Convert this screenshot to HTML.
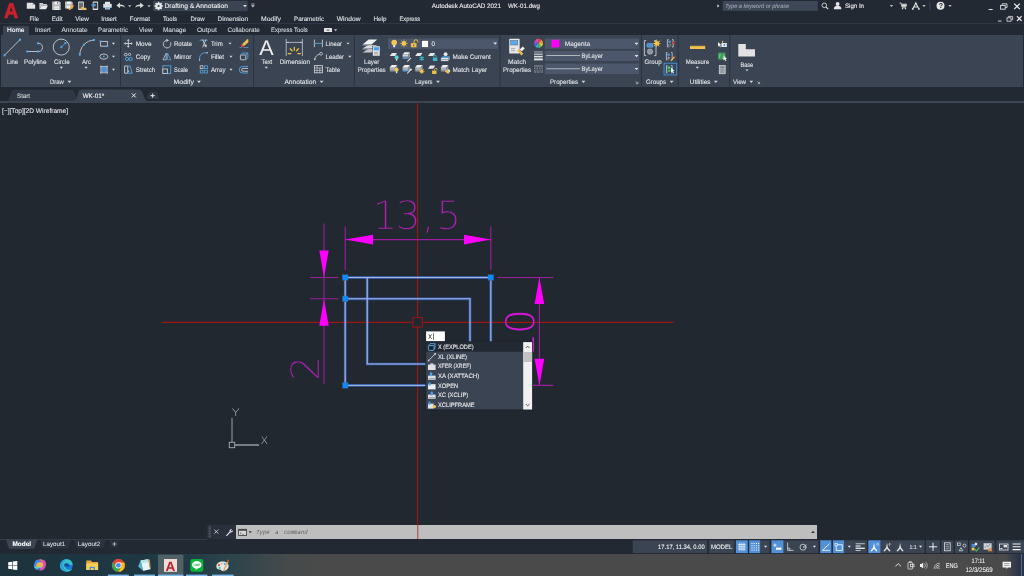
<!DOCTYPE html>
<html lang="en">
<head>
<meta charset="utf-8">
<title>Autodesk AutoCAD 2021 - WK-01.dwg</title>
<style>
html,body{margin:0;padding:0;background:#222933;overflow:hidden}
body{width:1024px;height:576px;position:relative;font-family:"Liberation Sans",sans-serif}
#app{position:absolute;left:0;top:0;width:1024px;height:576px;overflow:hidden;background:#222933}
.r{position:absolute}
#titlebar{left:0;top:0;width:1024px;height:12px;background:#222933}
#menubar{left:0;top:12px;width:1024px;height:11px;background:#222933}
#tabsep{left:0;top:23px;width:1024px;height:1px;background:#2f3744}
#ribbontabs{left:0;top:24px;width:1024px;height:11px;background:#222933}
#hometab{left:2.5px;top:25.8px;width:26.5px;height:9.2px;background:#3b4453;border-radius:1px 1px 0 0}
#ribbon{left:1px;top:34.6px;width:1022px;height:52px;background:#3b4453}
#filetabs{left:0;top:87px;width:1024px;height:15.5px;background:#222933}
#filestrip{left:0;top:100.9px;width:1024px;height:2.3px;background:#3b4453}
#canvas{left:0;top:103.2px;width:1024px;height:436px;background:#212830}
#cmdgrip{left:207px;top:525px;width:29px;height:14px;background:#2a313d}
#cmdline{left:236.2px;top:525.2px;width:580.6px;height:13.5px;background:#bebebe}
#layoutbar{left:0;top:539.4px;width:1024px;height:14.2px;background:#222933}
#layoutline{left:0;top:538.8px;width:207px;height:1px;background:#363d49}
#taskbar{left:0;top:553.8px;width:1024px;height:22.2px;background:linear-gradient(90deg,#1d333e 0,#1f3a45 180px,#2c444b 230px,#454a4b 285px,#4a4a4a 320px,#4a4a4a 100%)}
#tbright{left:1006px;top:553.8px;width:18px;height:22.2px;background:linear-gradient(90deg,rgba(40,50,74,0) 0,rgba(40,50,74,.9) 70%,#28324a 100%)}
#tbedge{left:1021.2px;top:553.8px;width:.8px;height:22.2px;background:#5d6473}
#overlay{position:absolute;left:0;top:0;width:1024px;height:576px;will-change:transform;transform:translateZ(0)}
#overlay{font-family:"Liberation Sans",sans-serif;text-rendering:geometricPrecision}
</style>
</head>
<body>
<div id="app">
<div class="r" id="titlebar"></div>
<div class="r" id="menubar"></div>
<div class="r" id="tabsep"></div>
<div class="r" id="ribbontabs"></div>
<div class="r" id="hometab"></div>
<div class="r" id="ribbon"></div>
<div class="r" id="filetabs"></div>
<div class="r" id="filestrip"></div>
<div class="r" id="canvas"></div>
<div class="r" id="cmdgrip"></div>
<div class="r" id="cmdline"></div>
<div class="r" id="layoutbar"></div>
<div class="r" id="layoutline"></div>
<div class="r" id="taskbar"></div>
<div class="r" id="tbright"></div>
<div class="r" id="tbedge"></div>
<svg id="overlay" width="1024" height="576" viewBox="0 0 1024 576">
<g id="title">
<text x="4" y="18.400" font-size="21.400" font-weight="bold" fill="#cc222b" stroke="#cc222b" stroke-width=".7" textLength="14.200" lengthAdjust="spacingAndGlyphs">A</text>
<g id="qat">
<path d="M26.800 2.700h5.800l2.600 2.400v3.700H26.800z" fill="#e2e2e2"/><path d="M32.600 2.700v2.400h2.600z" fill="#a8a8a8"/>
<path d="M39.400 3h3.200l.9 1h3.500v1.400H41.400L39.400 9.200z" fill="#c9c9c9"/><path d="M41.600 5.400h6.400L46 9.200H39.400z" fill="#e8e8e8"/>
<path d="M52.100 1.600h7.600l1 1v7.400H52.100z" fill="#b9b9b9"/><rect x="54.600" y="1.600" width="4" height="2.800" fill="#f2f2f2"/><rect x="57" y="2" width="1" height="1.800" fill="#7a7a7a"/><rect x="54.200" y="6.400" width="4.800" height="3.600" fill="#f2f2f2"/><rect x="54.200" y="7.800" width="4.800" height=".8" fill="#b9b9b9"/>
<path d="M65 1.600h6.800l1 1v6H65z" fill="#b9b9b9"/><rect x="67" y="1.600" width="3.800" height="2.400" fill="#f2f2f2"/><rect x="66.800" y="5.600" width="3.600" height="3" fill="#f2f2f2"/><path d="M68.600 10.200l.4-1.800 3.400-3.400 1.400 1.400-3.400 3.400z" fill="#e8b040"/><path d="M72.400 5l.8-.8 1.400 1.400-.8.800z" fill="#d8352e"/>
<rect x="78.100" y="1.400" width="5.800" height="8.600" rx=".7" fill="#d9d9d9"/><rect x="78.900" y="2.600" width="4.200" height="6" fill="#6f6f6f"/><path d="M81.400 7h1.800l.6.700h2.400l.4 2.300h-5.200z" fill="#ecc163"/>
<rect x="92.700" y="1.400" width="5.400" height="8.600" rx=".7" fill="#e4e4e4"/><rect x="93.500" y="2.600" width="3.800" height="6" fill="#2e3540"/><path d="M91.200 4.400h3v-1l2.200 1.700-2.200 1.700v-1h-3z" fill="#46a5ee"/>
<rect x="105" y="1.8" width="5" height="2.4" fill="#e9e9e9"/><rect x="103.2" y="3.8" width="8.6" height="4" rx=".6" fill="#d9d9d9"/><rect x="105" y="6.4" width="5" height="3" fill="#f2f2f2"/><rect x="105.4" y="7.2" width="4.2" height="1.6" fill="#53a7e8"/>
<path d="M116.4 5.4l3.6-2.8v1.8c3 0 4.6 1 4.9 3.4-1.2-1.3-2.6-1.7-4.9-1.6v2z" fill="#d9d9d9"/>
<path d="M128.10 5.25h3.2l-1.6 1.9z" fill="#c4c8ce"/>
<path d="M143.8 5.4l-3.6-2.8v1.8c-3 0-4.6 1-4.9 3.4 1.2-1.3 2.6-1.7 4.9-1.6v2z" fill="#d9d9d9"/>
<path d="M147.40 5.25h3.2l-1.6 1.9z" fill="#c4c8ce"/>
</g>
<rect x="153" y=".8" width="94.6" height="10.4" fill="#3b4453"/>
<g transform="translate(158.6 6)"><circle r="2.6" fill="none" stroke="#e8e8e8" stroke-width="1.5"/><g stroke="#e8e8e8" stroke-width="1.3"><path d="M0-4.2V4.2M-4.2 0H4.2M-3-3L3 3M-3 3L3-3"/></g><circle r="2.2" fill="#e8e8e8"/><circle r="1.1" fill="#3b4453"/></g>
<text x="164.40" y="8.20" font-size="6.6" fill="#f0f0f0" stroke="#f0f0f0" stroke-width="0.1" font-weight="normal" font-style="normal" textLength="63.60" lengthAdjust="spacingAndGlyphs">Drafting &amp; Annotation</text>
<path d="M243.10 5.10h3.8l-1.9 2.2z" fill="#e0e0e0"/>
<rect x="251.3" y="3.6" width="3.2" height=".8" fill="#c8c8c8"/>
<path d="M251.00 5.30h3.8l-1.9 2.2z" fill="#c8c8c8"/>
<text x="431.80" y="8.10" font-size="6.5" fill="#f0f0f0" stroke="#f0f0f0" stroke-width="0.1" font-weight="normal" font-style="normal" textLength="69.20" lengthAdjust="spacingAndGlyphs">Autodesk AutoCAD 2021</text>
<text x="508.00" y="8.10" font-size="6.5" fill="#f0f0f0" stroke="#f0f0f0" stroke-width="0.1" font-weight="normal" font-style="normal" textLength="32.00" lengthAdjust="spacingAndGlyphs">WK-01.dwg</text>
<path d="M717.4 4.2l2 1.7-2 1.7z" fill="#e0e0e0"/>
<rect x="722.8" y="1" width="95" height="9.8" fill="#3f4858"/>
<text x="725.30" y="8.00" font-size="5.9" fill="#9aa2b0" stroke="#9aa2b0" stroke-width="0.1" font-weight="normal" font-style="italic" textLength="63.90" lengthAdjust="spacingAndGlyphs">Type a keyword or phrase</text>
<circle cx="824.3" cy="5.3" r="2.3" fill="none" stroke="#d8d8d8" stroke-width=".9"/><path d="M826 7l2.2 2.2" stroke="#d8d8d8" stroke-width="1.1"/>
<circle cx="837.6" cy="4" r="1.9" fill="#e6e6e6"/><path d="M833.8 9.2c0-2.4 1.6-3.4 3.8-3.4s3.8 1 3.8 3.4z" fill="#e6e6e6"/>
<text x="845.00" y="8.10" font-size="6.3" fill="#f0f0f0" stroke="#f0f0f0" stroke-width="0.1" font-weight="normal" font-style="normal" textLength="19.00" lengthAdjust="spacingAndGlyphs">Sign In</text>
<path d="M889.90 5.05h3.2l-1.6 1.9z" fill="#c4c8ce"/>
<path d="M899.6 3h1.4l1 4.2h3.8l.8-3h-5" fill="none" stroke="#d8d8d8" stroke-width=".9"/><circle cx="902.6" cy="8.6" r=".8" fill="#d8d8d8"/><circle cx="905.4" cy="8.6" r=".8" fill="#d8d8d8"/><rect x="902" y="4.4" width="4" height="2.4" fill="#d8d8d8"/>
<path d="M912.800 8.800L915.800 3.200 918.800 8.800M913.900 7h3.800" fill="none" stroke="#e0e0e0" stroke-width="1.100"/><circle cx="912.700" cy="8.900" r=".9" fill="#e0e0e0"/><circle cx="918.900" cy="8.900" r=".9" fill="#e0e0e0"/><circle cx="915.800" cy="3.300" r=".9" fill="#e0e0e0"/>
<path d="M922.40 5.05h3.2l-1.6 1.9z" fill="#c4c8ce"/>
<rect x="929.6" y="1.6" width=".7" height="8.6" fill="#4a5262"/>
<circle cx="940.5" cy="5.8" r="4" fill="#e6e6e6"/>
<text x="938.7" y="8.3" font-size="7" font-weight="bold" fill="#222933">?</text>
<path d="M948.40 5.05h3.2l-1.6 1.9z" fill="#c4c8ce"/>
<rect x="988.600" y="9" width="4" height="1" fill="#e0e0e0"/>
<g fill="none" stroke="#e0e0e0" stroke-width=".9"><rect x="1000.600" y="5.400" width="4.600" height="3.800"/><path d="M1002.200 5.400V3.800h4.800v3.800h-1.600"/></g>
<path d="M1014.200 3.600l5.600 5.600M1019.800 3.600L1014.200 9.200" stroke="#f0f0f0" stroke-width="1.200"/>
<rect x="998" y="20.6" width="3.6" height=".9" fill="#e0e0e0"/>
<g fill="none" stroke="#e0e0e0" stroke-width=".8"><rect x="1007" y="17.8" width="4" height="3.4"/><path d="M1008.4 17.8v-1.4h4.2v3.4h-1.4"/></g>
<path d="M1017 16.2l4.6 4.8M1021.6 16.2L1017 21" stroke="#f0f0f0" stroke-width="1.1"/>
</g>
<g id="menu">
<text x="29.50" y="20.60" font-size="6.4" fill="#dfe2e6" stroke="#dfe2e6" stroke-width="0.1" font-weight="normal" font-style="normal" textLength="9.50" lengthAdjust="spacingAndGlyphs">File</text>
<text x="51.75" y="20.60" font-size="6.4" fill="#dfe2e6" stroke="#dfe2e6" stroke-width="0.1" font-weight="normal" font-style="normal" textLength="10.75" lengthAdjust="spacingAndGlyphs">Edit</text>
<text x="75.25" y="20.60" font-size="6.4" fill="#dfe2e6" stroke="#dfe2e6" stroke-width="0.1" font-weight="normal" font-style="normal" textLength="13.50" lengthAdjust="spacingAndGlyphs">View</text>
<text x="101.25" y="20.60" font-size="6.4" fill="#dfe2e6" stroke="#dfe2e6" stroke-width="0.1" font-weight="normal" font-style="normal" textLength="15.50" lengthAdjust="spacingAndGlyphs">Insert</text>
<text x="129.50" y="20.60" font-size="6.4" fill="#dfe2e6" stroke="#dfe2e6" stroke-width="0.1" font-weight="normal" font-style="normal" textLength="20.50" lengthAdjust="spacingAndGlyphs">Format</text>
<text x="163.00" y="20.60" font-size="6.4" fill="#dfe2e6" stroke="#dfe2e6" stroke-width="0.1" font-weight="normal" font-style="normal" textLength="14.00" lengthAdjust="spacingAndGlyphs">Tools</text>
<text x="190.50" y="20.60" font-size="6.4" fill="#dfe2e6" stroke="#dfe2e6" stroke-width="0.1" font-weight="normal" font-style="normal" textLength="14.00" lengthAdjust="spacingAndGlyphs">Draw</text>
<text x="217.50" y="20.60" font-size="6.4" fill="#dfe2e6" stroke="#dfe2e6" stroke-width="0.1" font-weight="normal" font-style="normal" textLength="30.50" lengthAdjust="spacingAndGlyphs">Dimension</text>
<text x="261.00" y="20.60" font-size="6.4" fill="#dfe2e6" stroke="#dfe2e6" stroke-width="0.1" font-weight="normal" font-style="normal" textLength="20.00" lengthAdjust="spacingAndGlyphs">Modify</text>
<text x="294.00" y="20.60" font-size="6.4" fill="#dfe2e6" stroke="#dfe2e6" stroke-width="0.1" font-weight="normal" font-style="normal" textLength="30.00" lengthAdjust="spacingAndGlyphs">Parametric</text>
<text x="336.75" y="20.60" font-size="6.4" fill="#dfe2e6" stroke="#dfe2e6" stroke-width="0.1" font-weight="normal" font-style="normal" textLength="23.75" lengthAdjust="spacingAndGlyphs">Window</text>
<text x="373.50" y="20.60" font-size="6.4" fill="#dfe2e6" stroke="#dfe2e6" stroke-width="0.1" font-weight="normal" font-style="normal" textLength="13.00" lengthAdjust="spacingAndGlyphs">Help</text>
<text x="399.50" y="20.60" font-size="6.4" fill="#dfe2e6" stroke="#dfe2e6" stroke-width="0.1" font-weight="normal" font-style="normal" textLength="20.75" lengthAdjust="spacingAndGlyphs">Express</text>
</g>
<g id="rtabs">
<text x="7.00" y="32.00" font-size="6.5" fill="#ffffff" stroke="#ffffff" stroke-width="0.1" font-weight="normal" font-style="normal" textLength="17.50" lengthAdjust="spacingAndGlyphs">Home</text>
<text x="35.00" y="32.00" font-size="6.4" fill="#d5d9de" stroke="#d5d9de" stroke-width="0.1" font-weight="normal" font-style="normal" textLength="15.75" lengthAdjust="spacingAndGlyphs">Insert</text>
<text x="61.50" y="32.00" font-size="6.4" fill="#d5d9de" stroke="#d5d9de" stroke-width="0.1" font-weight="normal" font-style="normal" textLength="26.00" lengthAdjust="spacingAndGlyphs">Annotate</text>
<text x="98.00" y="32.00" font-size="6.4" fill="#d5d9de" stroke="#d5d9de" stroke-width="0.1" font-weight="normal" font-style="normal" textLength="30.00" lengthAdjust="spacingAndGlyphs">Parametric</text>
<text x="139.00" y="32.00" font-size="6.4" fill="#d5d9de" stroke="#d5d9de" stroke-width="0.1" font-weight="normal" font-style="normal" textLength="13.50" lengthAdjust="spacingAndGlyphs">View</text>
<text x="163.00" y="32.00" font-size="6.4" fill="#d5d9de" stroke="#d5d9de" stroke-width="0.1" font-weight="normal" font-style="normal" textLength="23.25" lengthAdjust="spacingAndGlyphs">Manage</text>
<text x="197.00" y="32.00" font-size="6.4" fill="#d5d9de" stroke="#d5d9de" stroke-width="0.1" font-weight="normal" font-style="normal" textLength="19.75" lengthAdjust="spacingAndGlyphs">Output</text>
<text x="227.50" y="32.00" font-size="6.4" fill="#d5d9de" stroke="#d5d9de" stroke-width="0.1" font-weight="normal" font-style="normal" textLength="32.25" lengthAdjust="spacingAndGlyphs">Collaborate</text>
<text x="271.00" y="32.00" font-size="6.4" fill="#d5d9de" stroke="#d5d9de" stroke-width="0.1" font-weight="normal" font-style="normal" textLength="36.75" lengthAdjust="spacingAndGlyphs">Express Tools</text>
<rect x="324" y="28" width="8" height="4" rx=".6" fill="#e6e6e6"/><rect x="326.6" y="29.6" width="2.8" height=".9" fill="#3b4453"/>
<path d="M334.00 29.25h3.2l-1.6 1.9z" fill="#c4c8ce"/>
</g>
<g id="ribbon-draw">
<rect x="120.0" y="35" width="1" height="51.6" fill="#2b323e"/>
<rect x="253.1" y="35" width="1" height="51.6" fill="#2b323e"/>
<rect x="353.8" y="35" width="1" height="51.6" fill="#2b323e"/>
<rect x="499.5" y="35" width="1" height="51.6" fill="#2b323e"/>
<rect x="640.9" y="35" width="1" height="51.6" fill="#2b323e"/>
<rect x="677.7" y="35" width="1" height="51.6" fill="#2b323e"/>
<rect x="729.3" y="35" width="1" height="51.6" fill="#2b323e"/>
<path d="M4.6 55.2L19.8 39.8" stroke="#c9cdd3" stroke-width=".9"/><rect x="3.5" y="54.2" width="2.1" height="2.1" fill="#52a7e8"/><rect x="18.9" y="38.7" width="2.1" height="2.1" fill="#52a7e8"/>
<text x="6.90" y="64.00" font-size="6.6" fill="#e2e4e8" stroke="#e2e4e8" stroke-width="0.1" font-weight="normal" font-style="normal" textLength="11.20" lengthAdjust="spacingAndGlyphs">Line</text>
<path d="M27.2 51.5H38.4A4.05 4.05 0 0 0 38.4 43.4H37.6" fill="none" stroke="#c9cdd3" stroke-width=".9"/>
<rect x="26.2" y="50.5" width="2" height="2" fill="#52a7e8"/>
<rect x="37" y="50.5" width="2" height="2" fill="#52a7e8"/>
<rect x="37" y="42.4" width="2" height="2" fill="#52a7e8"/>
<text x="24.00" y="64.00" font-size="6.6" fill="#e2e4e8" stroke="#e2e4e8" stroke-width="0.1" font-weight="normal" font-style="normal" textLength="22.50" lengthAdjust="spacingAndGlyphs">Polyline</text>
<circle cx="61.25" cy="47.1" r="8" fill="none" stroke="#c9cdd3" stroke-width=".9"/><path d="M61.25 47.1L65.4 43.2" stroke="#52a7e8" stroke-width=".9"/><rect x="60.3" y="46.1" width="2" height="2" fill="#52a7e8"/><rect x="64.5" y="42.1" width="2" height="2" fill="#52a7e8"/>
<text x="54.00" y="64.00" font-size="6.6" fill="#e2e4e8" stroke="#e2e4e8" stroke-width="0.1" font-weight="normal" font-style="normal" textLength="15.75" lengthAdjust="spacingAndGlyphs">Circle</text>
<path d="M59.80 66.85h3.2l-1.6 1.9z" fill="#d8dbe0"/>
<path d="M79.8 54.6C80.2 46.6 86 40.6 94 40" fill="none" stroke="#c9cdd3" stroke-width=".9"/>
<rect x="78.8" y="53.6" width="2" height="2" fill="#52a7e8"/>
<rect x="83" y="43.8" width="2" height="2" fill="#52a7e8"/>
<rect x="93" y="39" width="2" height="2" fill="#52a7e8"/>
<text x="81.90" y="64.00" font-size="6.6" fill="#e2e4e8" stroke="#e2e4e8" stroke-width="0.1" font-weight="normal" font-style="normal" textLength="9.10" lengthAdjust="spacingAndGlyphs">Arc</text>
<path d="M84.50 66.85h3.2l-1.6 1.9z" fill="#d8dbe0"/>
<rect x="100.6" y="41.4" width="6.8" height="4.8" fill="none" stroke="#c9cdd3" stroke-width=".9"/><rect x="99.6" y="40.4" width="1.6" height="1.6" fill="#52a7e8"/><rect x="106.6" y="45.4" width="1.6" height="1.6" fill="#52a7e8"/>
<path d="M111.90 42.85h3.2l-1.6 1.9z" fill="#d8dbe0"/>
<ellipse cx="103.8" cy="56.6" rx="4" ry="2.6" fill="none" stroke="#c9cdd3" stroke-width=".9"/><rect x="103" y="55.8" width="1.5" height="1.5" fill="#52a7e8"/>
<path d="M111.90 55.65h3.2l-1.6 1.9z" fill="#d8dbe0"/>
<rect x="101" y="66.6" width="6" height="6" fill="#4f8fd0"/><path d="M100 66.4h8M100 72.8h8M100.8 65.6v8M107.2 65.6v8" stroke="#c9cdd3" stroke-width=".8"/>
<path d="M111.90 68.75h3.2l-1.6 1.9z" fill="#d8dbe0"/>
<text x="50.00" y="84.00" font-size="6.6" fill="#e2e4e8" stroke="#e2e4e8" stroke-width="0.1" font-weight="normal" font-style="normal" textLength="13.75" lengthAdjust="spacingAndGlyphs">Draw</text>
<path d="M67.50 80.80h3.8l-1.9 2.2z" fill="#d8dbe0"/>
</g>
<g id="ribbon-modify">
<g transform="translate(128.3 43.4)" fill="#c9cdd3"><path d="M-.5-3h1v6h-1zM-3-.5h6v1h-6z"/><path d="M0-4.4l1.5 1.7h-3zM0 4.4l1.5-1.7h-3zM-4.4 0l1.7-1.5v3zM4.4 0l-1.7-1.5v3z"/></g>
<text x="135.75" y="45.90" font-size="6.6" fill="#e2e4e8" stroke="#e2e4e8" stroke-width="0.1" font-weight="normal" font-style="normal" textLength="15.75" lengthAdjust="spacingAndGlyphs">Move</text>
<g fill="none" stroke-width=".9"><circle cx="125.8" cy="54.6" r="1.4" stroke="#c9cdd3"/><circle cx="129.6" cy="54.4" r="1.1" stroke="#c9cdd3"/><circle cx="127" cy="59" r="1.6" stroke="#52a7e8"/><circle cx="130.6" cy="59" r="1.6" stroke="#52a7e8"/></g>
<text x="135.75" y="59.00" font-size="6.6" fill="#e2e4e8" stroke="#e2e4e8" stroke-width="0.1" font-weight="normal" font-style="normal" textLength="14.75" lengthAdjust="spacingAndGlyphs">Copy</text>
<g fill="none" stroke-width=".9"><path d="M124.6 66v7.2h3.2V66z" stroke="#c9cdd3"/><path d="M127.8 66h2.4l2 7.2h-4.4" stroke="#52a7e8"/></g><rect x="127.6" y="70.6" width="1.6" height="1.2" fill="#c9cdd3"/>
<text x="135.75" y="71.50" font-size="6.6" fill="#e2e4e8" stroke="#e2e4e8" stroke-width="0.1" font-weight="normal" font-style="normal" textLength="19.50" lengthAdjust="spacingAndGlyphs">Stretch</text>
<path d="M170.400 42.300A3.800 3.800 0 1 1 166.400 40.400" fill="none" stroke="#c9cdd3" stroke-width=".9"/><path d="M166.200 38.800l2.900 1.500-2.700 1.700z" fill="#c9cdd3"/>
<text x="173.90" y="45.90" font-size="6.6" fill="#e2e4e8" stroke="#e2e4e8" stroke-width="0.1" font-weight="normal" font-style="normal" textLength="18.10" lengthAdjust="spacingAndGlyphs">Rotate</text>
<g fill="none" stroke-width=".8"><path d="M166.2 53.2v6.6h-3.2z" stroke="#c9cdd3"/><path d="M167.6 53.2v6.6h3.2z" stroke="#52a7e8"/></g>
<text x="173.90" y="59.00" font-size="6.6" fill="#e2e4e8" stroke="#e2e4e8" stroke-width="0.1" font-weight="normal" font-style="normal" textLength="17.60" lengthAdjust="spacingAndGlyphs">Mirror</text>
<g fill="none" stroke-width=".9"><rect x="162.8" y="65.8" width="8" height="7.6" stroke="#52a7e8"/><rect x="162.8" y="69" width="4.6" height="4.4" stroke="#c9cdd3" fill="#3b4453"/></g>
<text x="173.90" y="71.50" font-size="6.6" fill="#e2e4e8" stroke="#e2e4e8" stroke-width="0.1" font-weight="normal" font-style="normal" textLength="14.10" lengthAdjust="spacingAndGlyphs">Scale</text>
<g fill="none" stroke-width=".9"><path d="M199.6 40.2h8" stroke="#52a7e8"/><path d="M202.6 39.4l3.4 8M206 39.4l-3.4 8" stroke="#c9cdd3"/></g><circle cx="205.6" cy="45.6" r="1.2" fill="#c9cdd3"/>
<text x="210.90" y="45.90" font-size="6.6" fill="#e2e4e8" stroke="#e2e4e8" stroke-width="0.1" font-weight="normal" font-style="normal" textLength="11.85" lengthAdjust="spacingAndGlyphs">Trim</text>
<path d="M228.40 42.65h3.2l-1.6 1.9z" fill="#d8dbe0"/>
<path d="M199.6 60.4V58A5.2 5.2 0 0 1 204.8 52.8H207.6" fill="none" stroke="#52a7e8" stroke-width=".9"/><path d="M199.6 60.8v-1.6M206.2 52.8h1.8" stroke="#c9cdd3" stroke-width=".9"/>
<text x="210.90" y="59.00" font-size="6.6" fill="#e2e4e8" stroke="#e2e4e8" stroke-width="0.1" font-weight="normal" font-style="normal" textLength="13.10" lengthAdjust="spacingAndGlyphs">Fillet</text>
<path d="M229.40 55.85h3.2l-1.6 1.9z" fill="#d8dbe0"/>
<rect x="200.2" y="65.8" width="2.8" height="2.8" fill="none" stroke="#c9cdd3" stroke-width=".8"/>
<rect x="204.6" y="65.8" width="2.8" height="2.8" fill="none" stroke="#52a7e8" stroke-width=".8"/>
<rect x="200.2" y="70.2" width="2.8" height="2.8" fill="none" stroke="#52a7e8" stroke-width=".8"/>
<rect x="204.6" y="70.2" width="2.8" height="2.8" fill="none" stroke="#52a7e8" stroke-width=".8"/>
<text x="210.90" y="71.50" font-size="6.6" fill="#e2e4e8" stroke="#e2e4e8" stroke-width="0.1" font-weight="normal" font-style="normal" textLength="14.60" lengthAdjust="spacingAndGlyphs">Array</text>
<path d="M229.40 68.85h3.2l-1.6 1.9z" fill="#d8dbe0"/>
<path d="M241.800 44.600l5.600-5.600 1 .6v2.600l-5 4.400z" fill="#edc050"/><circle cx="242.300" cy="45.900" r="1.400" fill="#e8433c"/><path d="M239.600 47.500h2M243.600 47.500h5" stroke="#52a7e8" stroke-width=".7"/>
<g fill="none" stroke="#52a7e8" stroke-width=".9"><rect x="240.4" y="55" width="5.4" height="4.8" rx=".8" stroke="#c9cdd3"/><path d="M240.6 55l1.8-2h5.4v4.8l-1.8 2M245.8 55l2-2"/></g>
<g fill="none" stroke-width=".9"><path d="M248 66.4h-5.4a3.3 3.3 0 0 0 0 6.6H248" stroke="#52a7e8"/><path d="M248 68.4h-5a1.4 1.4 0 0 0 0 2.8H248" stroke="#c9cdd3"/></g>
<text x="173.60" y="84.00" font-size="6.6" fill="#e2e4e8" stroke="#e2e4e8" stroke-width="0.1" font-weight="normal" font-style="normal" textLength="20.30" lengthAdjust="spacingAndGlyphs">Modify</text>
<path d="M197.10 80.80h3.8l-1.9 2.2z" fill="#d8dbe0"/>
</g>
<g id="ribbon-annot">
<text x="259.300" y="55.100" font-size="21.200" fill="#eeeeee" textLength="14.400" lengthAdjust="spacingAndGlyphs">A</text>
<text x="261.50" y="64.00" font-size="6.6" fill="#e2e4e8" stroke="#e2e4e8" stroke-width="0.1" font-weight="normal" font-style="normal" textLength="10.75" lengthAdjust="spacingAndGlyphs">Text</text>
<path d="M264.70 66.85h3.2l-1.6 1.9z" fill="#d8dbe0"/>
<g fill="none" stroke="#c9cdd3" stroke-width=".8"><path d="M286.2 39v17M302.4 39v17M286.2 42.4h16.2"/></g><path d="M286.4 42.4l2-.9v1.8zM302.2 42.4l-2-.9v1.8z" fill="#c9cdd3"/>
<g stroke="#f0c040" stroke-width="1.300" stroke-linecap="round" fill="none"><path d="M294.300 47.400v2.800M290.200 48.800l1.900 2.100M298.400 48.800l-1.900 2.100M288.200 53.600h2.600M297.800 53.600h2.600"/></g>
<text x="279.75" y="64.00" font-size="6.6" fill="#e2e4e8" stroke="#e2e4e8" stroke-width="0.1" font-weight="normal" font-style="normal" textLength="30.25" lengthAdjust="spacingAndGlyphs">Dimension</text>
<path d="M314.4 39.6v7.6M322.4 39.6v7.6" stroke="#c9cdd3" stroke-width=".9"/><path d="M314.4 43.4h8" stroke="#52a7e8" stroke-width=".9"/>
<text x="325.60" y="45.90" font-size="6.6" fill="#e2e4e8" stroke="#e2e4e8" stroke-width="0.1" font-weight="normal" font-style="normal" textLength="16.40" lengthAdjust="spacingAndGlyphs">Linear</text>
<path d="M346.40 42.65h3.2l-1.6 1.9z" fill="#d8dbe0"/>
<path d="M314.6 59.6C315.6 56 317.4 54.6 319.6 54.2" fill="none" stroke="#c9cdd3" stroke-width=".9"/><circle cx="321" cy="53.8" r="1.4" fill="none" stroke="#c9cdd3" stroke-width=".8"/><path d="M314 60.4l.4-2.4 1.6 1.4z" fill="#c9cdd3"/>
<text x="325.60" y="59.00" font-size="6.6" fill="#e2e4e8" stroke="#e2e4e8" stroke-width="0.1" font-weight="normal" font-style="normal" textLength="18.40" lengthAdjust="spacingAndGlyphs">Leader</text>
<path d="M348.20 55.85h3.2l-1.6 1.9z" fill="#d8dbe0"/>
<rect x="314.4" y="65.6" width="8" height="7.2" fill="none" stroke="#c9cdd3" stroke-width=".9"/><path d="M314.4 68h8M314.4 70.4h8M317 65.6v7.2M319.8 68v4.8" stroke="#c9cdd3" stroke-width=".7"/>
<text x="325.60" y="71.50" font-size="6.6" fill="#e2e4e8" stroke="#e2e4e8" stroke-width="0.1" font-weight="normal" font-style="normal" textLength="14.40" lengthAdjust="spacingAndGlyphs">Table</text>
<text x="284.40" y="84.00" font-size="6.6" fill="#e2e4e8" stroke="#e2e4e8" stroke-width="0.1" font-weight="normal" font-style="normal" textLength="31.85" lengthAdjust="spacingAndGlyphs">Annotation</text>
<path d="M319.70 80.80h3.8l-1.9 2.2z" fill="#d8dbe0"/>
</g>
<g id="ribbon-layers">
<g><path d="M362.600 52.400l5.600-3.400h9l-5.600 3.400z" fill="#c3c7cc"/><path d="M362.600 48.400l5.600-3.400h9l-5.600 3.400z" fill="#d9dcdf"/><path d="M362.600 44.400l6-4.800h8.600l-5.600 4.800z" fill="#f0f1f2"/><path d="M362.600 44.400h9v1.200h-9zM362.600 48.400h9v1.200h-9z" fill="#9ea4ab"/><rect x="372.600" y="46" width="7.400" height="10" fill="#e9e9e9" stroke="#3b4453" stroke-width=".5"/><rect x="373.700" y="47.200" width="5.200" height="3.200" fill="#43a0ec"/><path d="M374 52.400h4.400M374 54h4.400" stroke="#8a9099" stroke-width=".8"/></g>
<text x="364.00" y="64.00" font-size="6.6" fill="#e2e4e8" stroke="#e2e4e8" stroke-width="0.1" font-weight="normal" font-style="normal" textLength="15.40" lengthAdjust="spacingAndGlyphs">Layer</text>
<text x="357.75" y="71.50" font-size="6.6" fill="#e2e4e8" stroke="#e2e4e8" stroke-width="0.1" font-weight="normal" font-style="normal" textLength="27.85" lengthAdjust="spacingAndGlyphs">Properties</text>
<rect x="388" y="38.5" width="110" height="10.4" fill="#4c576b"/>
<g><circle cx="394.200" cy="42.600" r="2.800" fill="#f5c851"/><rect x="393.200" y="45" width="2" height="2.200" fill="#ececec"/></g>
<g transform="translate(403.900 43.400)"><circle r="2.300" fill="#f5c851"/><path d="M0-4.100V4.100M-4.100 0H4.100M-2.900-2.900L2.900 2.900M-2.900 2.900L2.900-2.900" stroke="#f5c851" stroke-width=".7" opacity=".8"/></g>
<g><rect x="410.900" y="43.100" width="5.600" height="4.200" fill="#f0bf48"/><path d="M414 43.100v-1.500a1.900 1.900 0 0 1 3.800 0v.8" fill="none" stroke="#f0bf48" stroke-width="1"/><rect x="413.200" y="44.500" width="1" height="1.500" fill="#4c576b"/></g>
<rect x="421.6" y="40.3" width="6.8" height="7.2" fill="#ffffff" stroke="#2a303a" stroke-width=".6"/>
<text x="431.50" y="45.90" font-size="6.6" fill="#e2e4e8" stroke="#e2e4e8" stroke-width="0.1" font-weight="normal" font-style="normal" textLength="3.50" lengthAdjust="spacingAndGlyphs">0</text>
<path d="M493.30 42.50h3.8l-1.9 2.2z" fill="#e6e6e6"/>
<path d="M391.9 53h5.1l-2 3.100h-5.200z" fill="#e4e6e9"/>
<circle cx="396.6" cy="57.2" r="2" fill="#5fd0dc"/><rect x="395.9" y="58.8" width="1.400" height="1.800" fill="#e9e9e9"/>
<path d="M404.5 52.3h5.500l-1.800 2.300h-5.600z" fill="#eceeef"/>
<rect x="402.6" y="54.6" width="5.600" height="1.500" fill="#d4d7db"/><rect x="402.6" y="56.1" width="5.600" height="1.300" fill="#a9aeb5"/><rect x="402.6" y="57.4" width="5.600" height="1.500" fill="#5a9bd8"/>
<path d="M408.2 54.6l1.800-2.300v4.300l-1.800 2.300z" fill="#8d939b"/>
<path d="M407.200 60.900l3.300-3.500.9.900-3.300 3.300-1.100.300z" fill="#e6e6e6"/>
<path d="M417.3 53h5.1l-2 3.100h-5.200z" fill="#e4e6e9"/>
<g transform="translate(421.800 58.400)" stroke="#35b4c8" stroke-width="1.100"><path d="M0-2.500V2.500M-2.200-1.250L2.200 1.250M-2.200 1.250L2.200-1.250"/></g>
<path d="M430.1 53h5.1l-2 3.100h-5.200z" fill="#e4e6e9"/>
<rect x="432.9" y="57.6" width="4.400" height="3.400" fill="#3db8c8"/>
<path d="M433.8 57.6v-1a1.300 1.300 0 0 1 2.600 0v1" fill="none" stroke="#3db8c8" stroke-width=".8"/>
<path d="M442.800 56.400h7l-1.800 1.600h-7.100z" fill="#4f9fe0"/><rect x="440.900" y="58" width="7.100" height="1.100" fill="#e6e8ea"/><rect x="440.900" y="59.100" width="7.100" height="1" fill="#a9aeb5"/><rect x="440.900" y="60.100" width="7.100" height="1" fill="#e6e8ea"/><path d="M448 58l1.800-1.600v3.100l-1.800 1.600z" fill="#9aa0a8"/><path d="M442.800 56.400h7l-1.800 1.600h-7.100z" fill="#4f9fe0"/><circle cx="445.600" cy="54.200" r="1.900" fill="#e9e9e9"/>
<path d="M391.7 64.9h5.500l-1.800 2.300h-5.600z" fill="#eceeef"/>
<rect x="389.8" y="67.2" width="5.600" height="1.500" fill="#d4d7db"/><rect x="389.8" y="68.7" width="5.600" height="1.300" fill="#a9aeb5"/><rect x="389.8" y="70.0" width="5.600" height="1.500" fill="#8d939b"/>
<path d="M395.4 67.2l1.800-2.300v4.300l-1.800 2.300z" fill="#8d939b"/>
<circle cx="396.6" cy="69.8" r="2" fill="#f5c851"/><rect x="395.9" y="71.4" width="1.400" height="1.800" fill="#e9e9e9"/>
<path d="M404.5 64.9h5.500l-1.800 2.300h-5.600z" fill="#eceeef"/>
<rect x="402.6" y="67.2" width="5.600" height="1.500" fill="#d4d7db"/><rect x="402.6" y="68.7" width="5.600" height="1.300" fill="#a9aeb5"/><rect x="402.6" y="70.0" width="5.600" height="1.500" fill="#5a9bd8"/>
<path d="M408.2 67.2l1.800-2.300v4.300l-1.800 2.300z" fill="#8d939b"/>
<path d="M407.200 73.500l2.600-2.800M409.600 70.900l1.600-1.600" stroke="#e6e6e6" stroke-width="1.100" fill="none"/><circle cx="410.900" cy="69.600" r="1" fill="#e6e6e6"/>
<path d="M417.1 64.9h5.500l-1.800 2.300h-5.600z" fill="#eceeef"/>
<rect x="415.2" y="67.2" width="5.600" height="1.500" fill="#d4d7db"/><rect x="415.2" y="68.7" width="5.600" height="1.300" fill="#a9aeb5"/><rect x="415.2" y="70.0" width="5.600" height="1.500" fill="#8d939b"/>
<path d="M420.8 67.2l1.800-2.300v4.300l-1.800 2.300z" fill="#8d939b"/>
<g transform="translate(421.800 71.200)"><circle r="1.500" fill="#f5c851"/><path d="M0-2.800V2.800M-2.800 0H2.800M-2-2L2 2M-2 2L2-2" stroke="#f5c851" stroke-width=".7"/></g>
<path d="M430.1 65.6h5.1l-2 3.100h-5.200z" fill="#e4e6e9"/>
<rect x="432.1" y="70.6" width="4.400" height="3.400" fill="#f0bf48"/>
<path d="M434.5 70.6v-1a1.300 1.300 0 0 1 2.600 0v.6" fill="none" stroke="#f0bf48" stroke-width=".8"/>
<path d="M442.8 64.9h5.500l-1.800 2.300h-5.600z" fill="#eceeef"/>
<rect x="440.9" y="67.2" width="5.600" height="1.500" fill="#d4d7db"/><rect x="440.9" y="68.7" width="5.600" height="1.300" fill="#a9aeb5"/><rect x="440.9" y="70.0" width="5.600" height="1.500" fill="#8d939b"/>
<path d="M446.5 67.2l1.800-2.300v4.300l-1.800 2.300z" fill="#8d939b"/>
<path d="M444.800 71.400l2-1.800 3 2.400-1.600 2z" fill="#f0bf48"/><path d="M447.400 69.800l1.600-.6 1.400 1.800-.8 1.200z" fill="#f2f2f2"/>
<text x="452.40" y="58.80" font-size="6.6" fill="#e2e4e8" stroke="#e2e4e8" stroke-width="0.1" font-weight="normal" font-style="normal" textLength="38.50" lengthAdjust="spacingAndGlyphs">Make Current</text>
<text x="452.40" y="71.50" font-size="6.6" fill="#e2e4e8" stroke="#e2e4e8" stroke-width="0.1" font-weight="normal" font-style="normal" textLength="34.85" lengthAdjust="spacingAndGlyphs">Match Layer</text>
<text x="415.00" y="84.00" font-size="6.6" fill="#e2e4e8" stroke="#e2e4e8" stroke-width="0.1" font-weight="normal" font-style="normal" textLength="17.50" lengthAdjust="spacingAndGlyphs">Layers</text>
<path d="M436.10 80.80h3.8l-1.9 2.2z" fill="#d8dbe0"/>
</g>
<g id="ribbon-props">
<g><rect x="509.2" y="38.8" width="10.4" height="14.6" rx=".6" fill="#e6e6e6"/><rect x="510.6" y="40.4" width="7.2" height="4.6" fill="#58aaf0" stroke="#5d6572" stroke-width=".5"/><path d="M511 48.6h4M511 50.6h4" stroke="#8a9099" stroke-width=".7"/><path d="M517.2 50.6l2-1.6 4.2 4.8-2.2 1.8z" fill="#e8b64a"/><path d="M519.6 49.4l3.2-3 2 2.2-3 2.6z" fill="#f0f0f0"/></g>
<text x="508.00" y="64.00" font-size="6.6" fill="#e2e4e8" stroke="#e2e4e8" stroke-width="0.1" font-weight="normal" font-style="normal" textLength="18.25" lengthAdjust="spacingAndGlyphs">Match</text>
<text x="503.00" y="71.50" font-size="6.6" fill="#e2e4e8" stroke="#e2e4e8" stroke-width="0.1" font-weight="normal" font-style="normal" textLength="28.00" lengthAdjust="spacingAndGlyphs">Properties</text>
<path d="M538.5 43.2L538.50 38.70A4.5 4.5 0 0 1 541.68 40.02z" fill="#e8453c"/>
<path d="M538.5 43.2L541.68 40.02A4.5 4.5 0 0 1 543.00 43.20z" fill="#f29b38"/>
<path d="M538.5 43.2L543.00 43.20A4.5 4.5 0 0 1 541.68 46.38z" fill="#f2d338"/>
<path d="M538.5 43.2L541.68 46.38A4.5 4.5 0 0 1 538.50 47.70z" fill="#5cc24a"/>
<path d="M538.5 43.2L538.50 47.70A4.5 4.5 0 0 1 535.32 46.38z" fill="#38b6d8"/>
<path d="M538.5 43.2L535.32 46.38A4.5 4.5 0 0 1 534.00 43.20z" fill="#5566e0"/>
<path d="M538.5 43.2L534.00 43.20A4.5 4.5 0 0 1 535.32 40.02z" fill="#a44be0"/>
<path d="M538.5 43.2L535.32 40.02A4.5 4.5 0 0 1 538.50 38.70z" fill="#e84ba6"/>
<g fill="#dfe1e4"><rect x="534" y="51.6" width="8.8" height=".7"/><rect x="534" y="53.6" width="8.8" height="1.1"/><rect x="534" y="55.8" width="8.8" height="1.6"/><rect x="534" y="58.4" width="8.8" height="2"/></g>
<g stroke="#aab0b8" stroke-width=".8"><path d="M534 66h8.8" /><path d="M534 68.2h8.8" stroke-dasharray="1.6 .8"/><path d="M534 70.2h8.8" stroke-dasharray=".8 .8"/><path d="M534 72h8.8" stroke-dasharray="2.4 .8"/></g>
<rect x="544.8" y="38.6" width="94.2" height="10.2" fill="#4c576b"/>
<path d="M634.60 42.80h3.8l-1.9 2.2z" fill="#e6e6e6"/>
<rect x="544.8" y="50.9" width="94.2" height="10" fill="#4c576b"/>
<path d="M634.60 55.00h3.8l-1.9 2.2z" fill="#e6e6e6"/>
<rect x="544.8" y="63.6" width="94.2" height="10.4" fill="#4c576b"/>
<path d="M634.60 67.90h3.8l-1.9 2.2z" fill="#e6e6e6"/>
<rect x="551.3" y="39.7" width="8" height="7.8" fill="#ff00ff" stroke="#6b4f78" stroke-width=".4"/>
<text x="564.75" y="45.90" font-size="6.6" fill="#e2e4e8" stroke="#e2e4e8" stroke-width="0.1" font-weight="normal" font-style="normal" textLength="25.25" lengthAdjust="spacingAndGlyphs">Magenta</text>
<rect x="546.3" y="55.2" width="33.8" height=".8" fill="#c9cdd3"/>
<text x="581.50" y="58.00" font-size="6.6" fill="#e2e4e8" stroke="#e2e4e8" stroke-width="0.1" font-weight="normal" font-style="normal" textLength="21.50" lengthAdjust="spacingAndGlyphs">ByLayer</text>
<rect x="546.3" y="68.4" width="33.8" height=".8" fill="#c9cdd3"/>
<text x="581.50" y="70.90" font-size="6.6" fill="#e2e4e8" stroke="#e2e4e8" stroke-width="0.1" font-weight="normal" font-style="normal" textLength="21.50" lengthAdjust="spacingAndGlyphs">ByLayer</text>
<text x="550.00" y="84.00" font-size="6.6" fill="#e2e4e8" stroke="#e2e4e8" stroke-width="0.1" font-weight="normal" font-style="normal" textLength="28.00" lengthAdjust="spacingAndGlyphs">Properties</text>
<path d="M581.60 80.80h3.8l-1.9 2.2z" fill="#d8dbe0"/>
<path d="M635.6 81.4l2.2 2.2M637.8 81.8v1.8h-1.8" fill="none" stroke="#c4c8ce" stroke-width=".7"/>
</g>
<g id="ribbon-groups">
<g fill="none" stroke="#c9cdd3" stroke-width=".9"><path d="M646.2 40.6h-1.8v15h1.8M654.2 40.6h1.8v15h-1.8"/></g><rect x="647" y="43.4" width="6" height="3.8" rx=".6" fill="#4a8fd0" stroke="#7db9ee" stroke-width=".5"/><circle cx="650" cy="51.6" r="2.7" fill="#8e949c" stroke="#c9cdd3" stroke-width=".5"/>
<g transform="translate(656.8 43.2)" fill="#f5c445"><path d="M0-4.2L.9-1.4 3.6-2.6 2-.2 4.2.6 1.8 1.2 2.8 3.6.4 2 0 4.4-.8 2-3 3.4-1.8 1-4.2.4-1.6-.4-3.2-2.8-.8-1.6z"/></g>
<text x="644.50" y="64.00" font-size="6.6" fill="#e2e4e8" stroke="#e2e4e8" stroke-width="0.1" font-weight="normal" font-style="normal" textLength="17.10" lengthAdjust="spacingAndGlyphs">Group</text>
<g><path d="M668.6 39.6h-1.2v7.4h1.2M672 39.6h1.2v7.4H672" fill="none" stroke="#c9cdd3" stroke-width=".8"/><rect x="668.2" y="40.6" width="2.8" height="2.2" fill="#4a8fd0"/><circle cx="669.6" cy="45.2" r="1.2" fill="none" stroke="#aab0b8" stroke-width=".6"/><path d="M672 41.6l2.6 2.8M674.6 41.6l-2.6 2.8" stroke="#e0413a" stroke-width="1.2"/></g>
<g><path d="M667.6 52.6h-1.2v7.4h1.2M671 52.6h1.2v7.4H671" fill="none" stroke="#c9cdd3" stroke-width=".8"/><rect x="667.2" y="53.6" width="2.8" height="2.2" fill="#4a8fd0"/><rect x="667.6" y="56.8" width="2" height="2.4" fill="#9aa0a8"/><path d="M670.4 60.4l3.4-3.8 1 1-3.4 3.6z" fill="#e8b64a"/><path d="M673.8 56.6l.8-.8 1 1-.8.8z" fill="#e0413a"/></g>
<rect x="664" y="63.2" width="12.8" height="11.8" fill="#324a64" stroke="#4a9be0" stroke-width=".8"/>
<g><path d="M667.6 65.6h-1.2v7.4h1.2M671 65.6h1.2v7.4H671" fill="none" stroke="#c9cdd3" stroke-width=".8"/><rect x="667.4" y="66.4" width="3" height="2.4" fill="#5cc26a"/><rect x="667.4" y="69.6" width="3" height="2.4" fill="#49a858"/><path d="M671 67.4v5l1.2-1 1 2 .8-.4-1-2h1.6z" fill="#f0f0f0"/></g>
<text x="646.00" y="84.00" font-size="6.6" fill="#e2e4e8" stroke="#e2e4e8" stroke-width="0.1" font-weight="normal" font-style="normal" textLength="20.00" lengthAdjust="spacingAndGlyphs">Groups</text>
<path d="M669.70 80.80h3.8l-1.9 2.2z" fill="#d8dbe0"/>
</g>
<g id="ribbon-util">
<rect x="690" y="45.8" width="15.2" height="3.2" fill="#f2c14e"/><path d="M691.4 45.8v1.4M693.2 45.8v1M695 45.8v1.4M696.8 45.8v1M698.6 45.8v1.4M700.4 45.8v1M702.2 45.8v1.4M704 45.8v1" stroke="#9a7a2a" stroke-width=".4"/>
<text x="685.75" y="64.00" font-size="6.6" fill="#e2e4e8" stroke="#e2e4e8" stroke-width="0.1" font-weight="normal" font-style="normal" textLength="23.35" lengthAdjust="spacingAndGlyphs">Measure</text>
<path d="M695.70 66.85h3.2l-1.6 1.9z" fill="#d8dbe0"/>
<g><rect x="721.4" y="43" width="5.4" height="4" fill="#f0f0f0"/><rect x="723.6" y="43.8" width="1.6" height="2.4" fill="#4a9fe8"/><path d="M718 42v4.600000000000001l1.200-1 .8 1.800.8-.4-.8-1.800h1.400z" fill="#f0f0f0"/><path d="M722 40l.5 1.200 1.200.2-.9.800.3 1.200-1.100-.7z" fill="#f2c14e"/></g>
<g><rect x="718" y="52.600" width="7.400" height="7" fill="#3f9a58"/><path d="M719.600 58v-3.200h1.600M722 58.400h2v-4" fill="none" stroke="#a8e0b4" stroke-width=".6"/><path d="M723.600 55.400v5l1.200-1 .8 1.800.8-.4-.8-1.800h1.400z" fill="#f0f0f0"/></g>
<g><rect x="719.200" y="65.400" width="6" height="8.400" fill="#a9adb3" stroke="#dfe1e4" stroke-width=".6"/><rect x="720.200" y="66.400" width="4" height="1.800" fill="#80858d"/><path d="M720.200 69.600h4M720.200 71h4M720.200 72.400h4M722.200 69v4" stroke="#80858d" stroke-width=".5"/></g>
<text x="689.75" y="84.00" font-size="6.6" fill="#e2e4e8" stroke="#e2e4e8" stroke-width="0.1" font-weight="normal" font-style="normal" textLength="20.65" lengthAdjust="spacingAndGlyphs">Utilities</text>
<path d="M713.90 80.80h3.8l-1.9 2.2z" fill="#d8dbe0"/>
</g>
<g id="ribbon-view">
<path d="M738.3 44h7.500v5.300h9.200v7.200h-16.700z" fill="#e2e2e2"/>
<text x="740.40" y="66.50" font-size="6.6" fill="#e2e4e8" stroke="#e2e4e8" stroke-width="0.1" font-weight="normal" font-style="normal" textLength="12.85" lengthAdjust="spacingAndGlyphs">Base</text>
<path d="M745.40 69.45h3.2l-1.6 1.9z" fill="#d8dbe0"/>
<text x="732.90" y="84.00" font-size="6.6" fill="#e2e4e8" stroke="#e2e4e8" stroke-width="0.1" font-weight="normal" font-style="normal" textLength="13.10" lengthAdjust="spacingAndGlyphs">View</text>
<path d="M749.40 80.80h3.8l-1.9 2.2z" fill="#d8dbe0"/>
<path d="M757.400 81.400l2.200 2.200M759.600 81.800v1.800h-1.800" fill="none" stroke="#c4c8ce" stroke-width=".7"/>
</g>
<g id="ftabs">
<path d="M6.500 101C10.500 101 10 89.700 13.800 89.700H72C75.800 89.700 75.300 101 79 101z" fill="#2f3744"/>
<path d="M73.500 101C77.800 101 77.200 89.600 81 89.600H139.300C143.600 89.600 143.200 101 148.400 101z" fill="#3b4453"/>
<path d="M146.400 96.800C148.400 93.600 148.600 91.600 151 91.600H155.600C158 91.600 157.400 94.400 159.200 99.200H149.600C147.800 99.200 146.400 98.200 146.400 96.800z" fill="#2f3744"/>
<text x="17.10" y="98.10" font-size="6.4" fill="#d5d9de" stroke="#d5d9de" stroke-width="0.1" font-weight="normal" font-style="normal" textLength="12.90" lengthAdjust="spacingAndGlyphs">Start</text>
<text x="82.70" y="98.10" font-size="6.4" fill="#f0f0f0" stroke="#f0f0f0" stroke-width="0.1" font-weight="normal" font-style="normal" textLength="21.60" lengthAdjust="spacingAndGlyphs">WK-01*</text>
<path d="M131.800 93.400l4 4M135.800 93.400l-4 4" stroke="#ececec" stroke-width="1"/>
<path d="M150.500 95.600h4.200M152.600 93.500v4.200" stroke="#d4d8de" stroke-width="1.100"/>
</g>
<g id="drawing">
<text x="2.00" y="113.00" font-size="6.7" fill="#e0e2e6" stroke="#e0e2e6" stroke-width="0.1" font-weight="normal" font-style="normal" textLength="66.10" lengthAdjust="spacingAndGlyphs">[−][Top][2D Wireframe]</text>
<path d="M231.5 444.1h1v1h-1zM231.5 417.1h1v1h-1zM231.5 390.1h1v1h-1zM231.5 363.2h1v1h-1zM231.5 336.2h1v1h-1zM231.5 309.2h1v1h-1zM231.5 282.2h1v1h-1zM231.5 255.2h1v1h-1zM231.5 228.3h1v1h-1zM258.5 444.1h1v1h-1zM258.5 417.1h1v1h-1zM258.5 390.1h1v1h-1zM258.5 363.2h1v1h-1zM258.5 336.2h1v1h-1zM258.5 309.2h1v1h-1zM258.5 282.2h1v1h-1zM258.5 255.2h1v1h-1zM258.5 228.3h1v1h-1zM285.5 444.1h1v1h-1zM285.5 417.1h1v1h-1zM285.5 390.1h1v1h-1zM285.5 363.2h1v1h-1zM285.5 336.2h1v1h-1zM285.5 309.2h1v1h-1zM285.5 282.2h1v1h-1zM285.5 255.2h1v1h-1zM285.5 228.3h1v1h-1zM312.4 444.1h1v1h-1zM312.4 417.1h1v1h-1zM312.4 390.1h1v1h-1zM312.4 363.2h1v1h-1zM312.4 336.2h1v1h-1zM312.4 309.2h1v1h-1zM312.4 282.2h1v1h-1zM312.4 255.2h1v1h-1zM312.4 228.3h1v1h-1zM339.4 444.1h1v1h-1zM339.4 417.1h1v1h-1zM339.4 390.1h1v1h-1zM339.4 363.2h1v1h-1zM339.4 336.2h1v1h-1zM339.4 309.2h1v1h-1zM339.4 282.2h1v1h-1zM339.4 255.2h1v1h-1zM339.4 228.3h1v1h-1zM366.4 444.1h1v1h-1zM366.4 417.1h1v1h-1zM366.4 390.1h1v1h-1zM366.4 363.2h1v1h-1zM366.4 336.2h1v1h-1zM366.4 309.2h1v1h-1zM366.4 282.2h1v1h-1zM366.4 255.2h1v1h-1zM366.4 228.3h1v1h-1zM393.4 444.1h1v1h-1zM393.4 417.1h1v1h-1zM393.4 390.1h1v1h-1zM393.4 363.2h1v1h-1zM393.4 336.2h1v1h-1zM393.4 309.2h1v1h-1zM393.4 282.2h1v1h-1zM393.4 255.2h1v1h-1zM393.4 228.3h1v1h-1zM420.4 444.1h1v1h-1zM420.4 417.1h1v1h-1zM420.4 390.1h1v1h-1zM420.4 363.2h1v1h-1zM420.4 336.2h1v1h-1zM420.4 309.2h1v1h-1zM420.4 282.2h1v1h-1zM420.4 255.2h1v1h-1zM420.4 228.3h1v1h-1zM447.3 444.1h1v1h-1zM447.3 417.1h1v1h-1zM447.3 390.1h1v1h-1zM447.3 363.2h1v1h-1zM447.3 336.2h1v1h-1zM447.3 309.2h1v1h-1zM447.3 282.2h1v1h-1zM447.3 255.2h1v1h-1zM447.3 228.3h1v1h-1zM474.3 444.1h1v1h-1zM474.3 417.1h1v1h-1zM474.3 390.1h1v1h-1zM474.3 363.2h1v1h-1zM474.3 336.2h1v1h-1zM474.3 309.2h1v1h-1zM474.3 282.2h1v1h-1zM474.3 255.2h1v1h-1zM474.3 228.3h1v1h-1zM501.3 444.1h1v1h-1zM501.3 417.1h1v1h-1zM501.3 390.1h1v1h-1zM501.3 363.2h1v1h-1zM501.3 336.2h1v1h-1zM501.3 309.2h1v1h-1zM501.3 282.2h1v1h-1zM501.3 255.2h1v1h-1zM501.3 228.3h1v1h-1zM528.3 444.1h1v1h-1zM528.3 417.1h1v1h-1zM528.3 390.1h1v1h-1zM528.3 363.2h1v1h-1zM528.3 336.2h1v1h-1zM528.3 309.2h1v1h-1zM528.3 282.2h1v1h-1zM528.3 255.2h1v1h-1zM528.3 228.3h1v1h-1zM555.3 444.1h1v1h-1zM555.3 417.1h1v1h-1zM555.3 390.1h1v1h-1zM555.3 363.2h1v1h-1zM555.3 336.2h1v1h-1zM555.3 309.2h1v1h-1zM555.3 282.2h1v1h-1zM555.3 255.2h1v1h-1zM555.3 228.3h1v1h-1zM582.2 444.1h1v1h-1zM582.2 417.1h1v1h-1zM582.2 390.1h1v1h-1zM582.2 363.2h1v1h-1zM582.2 336.2h1v1h-1zM582.2 309.2h1v1h-1zM582.2 282.2h1v1h-1zM582.2 255.2h1v1h-1zM582.2 228.3h1v1h-1zM609.2 444.1h1v1h-1zM609.2 417.1h1v1h-1zM609.2 390.1h1v1h-1zM609.2 363.2h1v1h-1zM609.2 336.2h1v1h-1zM609.2 309.2h1v1h-1zM609.2 282.2h1v1h-1zM609.2 255.2h1v1h-1zM609.2 228.3h1v1h-1zM636.2 444.1h1v1h-1zM636.2 417.1h1v1h-1zM636.2 390.1h1v1h-1zM636.2 363.2h1v1h-1zM636.2 336.2h1v1h-1zM636.2 309.2h1v1h-1zM636.2 282.2h1v1h-1zM636.2 255.2h1v1h-1zM636.2 228.3h1v1h-1zM663.2 444.1h1v1h-1zM663.2 417.1h1v1h-1zM663.2 390.1h1v1h-1zM663.2 363.2h1v1h-1zM663.2 336.2h1v1h-1zM663.2 309.2h1v1h-1zM663.2 282.2h1v1h-1zM663.2 255.2h1v1h-1zM663.2 228.3h1v1h-1z" fill="#4e1f28"/>
<path d="M161.800 322.300H412.800M422.400 322.300H673.600M417.600 103.200V317.500M417.600 327.100V539" stroke="#9c1414" stroke-width="1.200" fill="none"/>
<rect x="412.900" y="317.600" width="9.400" height="9.400" fill="none" stroke="#9c1414" stroke-width="1"/>
<g stroke="#9d1e9e" stroke-width="1.100" fill="none">
<path d="M345.200 226.500V270M490.800 226.500V270M345.500 239.600H490.500"/>
<path d="M324 223.500V384M310 277.500H338.500M310 298.800H338.500"/>
<path d="M539.400 277.500V385.400M497.500 277.500H553.300M497.500 385.400H553.300"/>
</g>
<g fill="#ff00ff">
<path d="M345.500 239.600L373 234.700V244.500z"/><path d="M490.500 239.600L464 234.700V244.500z"/>
<path d="M324 277.500L319.300 250.400H328.700z"/><path d="M324 298.800L319.300 325.800H328.700z"/>
<path d="M539.400 277.500L534.600 304H544.200z"/><path d="M539.400 385.400L534.600 358.800H544.200z"/>
</g>
<text x="372.500 395.800 422 436.200" y="229" font-size="39.200" font-weight="200" fill="#ab22ac" stroke="#212830" stroke-width=".45" font-family="'DejaVu Sans Light','DejaVu Sans',sans-serif">13,5</text>
<text transform="translate(319 380.800) rotate(-90)" font-size="39.200" font-weight="200" fill="#ab22ac" stroke="#212830" stroke-width=".45" font-family="'DejaVu Sans Light','DejaVu Sans',sans-serif">2</text>
<text transform="translate(534 353) rotate(-90)" x="-4.500 19" font-size="39.200" font-weight="200" fill="#d416d6" font-family="'DejaVu Sans Light','DejaVu Sans',sans-serif">10</text>
<g fill="none" stroke="#3a63c0" stroke-width="2.700" opacity=".85"><rect x="345.200" y="277.500" width="145.600" height="107.900"/><path d="M345.200 298.800H470V364H367.200V277.500"/></g>
<g fill="none" stroke="#a4b9e6" stroke-width="1.100"><rect x="345.200" y="277.500" width="145.600" height="107.900"/><path d="M345.200 298.800H470V364H367.200V277.500"/></g>
<rect x="342.4" y="274.7" width="5.600" height="5.600" fill="#0a8cff" stroke="#4a5a72" stroke-width=".4"/>
<rect x="488.0" y="274.7" width="5.600" height="5.600" fill="#0a8cff" stroke="#4a5a72" stroke-width=".4"/>
<rect x="342.4" y="296.0" width="5.600" height="5.600" fill="#0a8cff" stroke="#4a5a72" stroke-width=".4"/>
<rect x="342.4" y="382.6" width="5.600" height="5.600" fill="#0a8cff" stroke="#4a5a72" stroke-width=".4"/>
<g stroke="#a9adb3" fill="none"><path d="M232 418V442.200" stroke-width=".9"/><path d="M234.900 445H259" stroke-width="1.300"/><rect x="229.300" y="442.300" width="5.400" height="5.400" stroke-width=".9"/></g>
<text x="231.800" y="416.100" font-size="10.200" font-weight="200" fill="#b4b8be" font-family="'DejaVu Sans Light','DejaVu Sans',sans-serif" textLength="8" lengthAdjust="spacingAndGlyphs">Y</text>
<text x="260.600" y="444.400" font-size="10.200" font-weight="200" fill="#b4b8be" font-family="'DejaVu Sans Light','DejaVu Sans',sans-serif" textLength="7.600" lengthAdjust="spacingAndGlyphs">X</text>
<rect x="426.100" y="331.400" width="18.800" height="10" fill="#ffffff"/>
<text x="428.30" y="339.40" font-size="6.4" fill="#1a1a1a" stroke="#1a1a1a" stroke-width="0.1" font-weight="normal" font-style="normal" textLength="3.70" lengthAdjust="spacingAndGlyphs">X</text>
<rect x="433" y="333.200" width=".6" height="6.600" fill="#111"/>
<rect x="425.800" y="341.700" width="106.700" height="68.200" fill="#3b4453" stroke="#1b2027" stroke-width=".7"/>
<rect x="426.200" y="342.100" width="96.800" height="9.600" fill="#222933"/>
<rect x="523.200" y="342.100" width="8.900" height="67.400" fill="#f1f1f1"/>
<rect x="523.200" y="352" width="8.900" height="10" fill="#c2c2c2"/>
<path d="M525.800 348l1.900-1.900 1.900 1.900M525.800 404l1.900 1.900 1.900-1.900" fill="none" stroke="#505050" stroke-width=".9"/>
<text x="438.00" y="349.20" font-size="6.3" fill="#f0f0f0" stroke="#f0f0f0" stroke-width="0.1" font-weight="normal" font-style="normal" textLength="35.50" lengthAdjust="spacingAndGlyphs">X (EXPLODE)</text>
<text x="438.00" y="358.78" font-size="6.3" fill="#f0f0f0" stroke="#f0f0f0" stroke-width="0.1" font-weight="normal" font-style="normal" textLength="29.00" lengthAdjust="spacingAndGlyphs">XL (XLINE)</text>
<text x="438.00" y="368.36" font-size="6.3" fill="#f0f0f0" stroke="#f0f0f0" stroke-width="0.1" font-weight="normal" font-style="normal" textLength="33.20" lengthAdjust="spacingAndGlyphs">XFER (XREF)</text>
<text x="438.00" y="377.94" font-size="6.3" fill="#f0f0f0" stroke="#f0f0f0" stroke-width="0.1" font-weight="normal" font-style="normal" textLength="41.30" lengthAdjust="spacingAndGlyphs">XA (XATTACH)</text>
<text x="438.00" y="387.52" font-size="6.3" fill="#f0f0f0" stroke="#f0f0f0" stroke-width="0.1" font-weight="normal" font-style="normal" textLength="20.20" lengthAdjust="spacingAndGlyphs">XOPEN</text>
<text x="438.00" y="397.10" font-size="6.3" fill="#f0f0f0" stroke="#f0f0f0" stroke-width="0.1" font-weight="normal" font-style="normal" textLength="30.20" lengthAdjust="spacingAndGlyphs">XC (XCLIP)</text>
<text x="438.00" y="406.68" font-size="6.3" fill="#f0f0f0" stroke="#f0f0f0" stroke-width="0.1" font-weight="normal" font-style="normal" textLength="36.60" lengthAdjust="spacingAndGlyphs">XCLIPFRAME</text>
<g>
<rect x="428.400" y="345.600" width="5.600" height="4.800" rx=".8" fill="#1d232c" stroke="#6fb4ea" stroke-width=".9"/><path d="M428.600 345.600l1.400-2h5v4.600l-1 1.400M434 345.600l1.200-1.800" fill="none" stroke="#52a7e8" stroke-width=".8"/>
<path d="M428.600 360.600l6.600-6.800" stroke="#dcdfe3" stroke-width=".8"/><path d="M436 353l-.4 2.200-1.800-1.800zM427.800 361.400l.4-2.200 1.800 1.800z" fill="#dcdfe3"/>
<rect x="428" y="364.600" width="7.600" height="5.400" fill="#dfe1e4"/><rect x="430.200" y="363.400" width="3.200" height="1.400" fill="#dfe1e4"/>
<rect x="428" y="375.600" width="7.600" height="4.200" fill="#dfe1e4"/><rect x="429.800" y="372.200" width="2.400" height="4" rx="1" fill="#4a9fe8"/><path d="M428.600 378.600h6.400" stroke="#6b7079" stroke-width=".6"/>
<rect x="428" y="384.200" width="7.600" height="5.200" fill="#eceeef"/><rect x="428.600" y="382.200" width="2" height="3.600" rx="1" fill="#4a9fe8"/>
<rect x="428" y="394.600" width="7.600" height="4.200" fill="#dfe1e4"/><rect x="430.600" y="391.400" width="2.400" height="4" rx="1" fill="#4a9fe8"/><path d="M428.600 397.600h6.400" stroke="#6b7079" stroke-width=".6"/>
<rect x="428" y="403.600" width="5.600" height="5" fill="#dfe1e4"/><rect x="428.400" y="401.600" width="2" height="3.400" rx="1" fill="#4a9fe8"/><circle cx="434.400" cy="406.600" r="1.700" fill="#f2c14e"/>
</g>
</g>
<g id="cmd">
<rect x="417.100" y="525.200" width="1" height="13.500" fill="#b97070"/>
<g fill="#596170"><rect x="208.600" y="526.6" width="2.200" height=".9"/><rect x="208.600" y="528.2" width="2.200" height=".9"/><rect x="208.600" y="529.8" width="2.200" height=".9"/><rect x="208.600" y="531.4" width="2.200" height=".9"/><rect x="208.600" y="533" width="2.200" height=".9"/><rect x="208.600" y="534.6" width="2.200" height=".9"/><rect x="208.600" y="536.2" width="2.200" height=".9"/></g>
<path d="M214.300 529.600l4 4M218.300 529.600l-4 4" stroke="#d0d4da" stroke-width=".9"/>
<path d="M226 535.400l3.600-3.800a2 2 0 0 1 2.400-2.600l-1.200 1.400.8.900 1.400-1.100a2 2 0 0 1-2.600 2.200l-3.600 3.800z" fill="#e0e0e0"/>
<rect x="238.600" y="529.300" width="8" height="6.200" fill="#d6d6d6" stroke="#3a3a3a" stroke-width=".8"/><rect x="238.600" y="529.300" width="8" height="1.400" fill="#3a3a3a"/><path d="M240 532.400l1.200.9-1.200.9M242 534.400h2" stroke="#3a3a3a" stroke-width=".5" fill="none"/>
<path d="M248.60 531.25h3.2l-1.6 1.9z" fill="#3a3a3a"/>
<text x="256.200" y="534.100" font-size="6.200" font-style="italic" fill="#5e5e5e" word-spacing="2.200" textLength="51.500" lengthAdjust="spacingAndGlyphs" font-family="'Liberation Mono',monospace">Type a command</text>
<path d="M811 533l2-2.200 2 2.200z" fill="#3a3a3a"/>
</g>
<g id="layout">
<path d="M5 539.400C7.600 539.400 7.200 548.700 10 548.700H33.200C36 548.700 35.600 539.400 38.200 539.400z" fill="#3b4453"/>
<path d="M38.400 539.800C41 539.800 40.600 548.400 43.400 548.400H67C69.800 548.400 69.400 539.800 72 539.800z" fill="#2c333f"/>
<path d="M73 539.800C75.600 539.800 75.200 548.400 78 548.400H102C104.800 548.400 104.400 539.800 107 539.800z" fill="#2c333f"/>
<path d="M108.600 540.600C110.400 540.600 110.200 547.500 112 547.500H117C118.800 547.500 118.600 540.600 120.400 540.600z" fill="#2c333f"/>
<text x="12.50" y="546.10" font-size="6.4" fill="#ffffff" stroke="#ffffff" stroke-width="0.1" font-weight="bold" font-style="normal" textLength="18.50" lengthAdjust="spacingAndGlyphs">Model</text>
<text x="43.10" y="546.10" font-size="6.2" fill="#d5d9de" stroke="#d5d9de" stroke-width="0.1" font-weight="normal" font-style="normal" textLength="22.15" lengthAdjust="spacingAndGlyphs">Layout1</text>
<text x="77.75" y="546.10" font-size="6.2" fill="#d5d9de" stroke="#d5d9de" stroke-width="0.1" font-weight="normal" font-style="normal" textLength="22.50" lengthAdjust="spacingAndGlyphs">Layout2</text>
<path d="M112.400 544h4M114.400 542v4" stroke="#c4c8ce" stroke-width=".8"/>
</g>
<g id="status">
<rect x="632.7" y="540.300" width="74.50" height="12.800" fill="#3b4453"/>
<text x="658.00" y="548.90" font-size="6.3" fill="#f0f0f0" stroke="#f0f0f0" stroke-width="0.1" font-weight="normal" font-style="normal" textLength="46.70" lengthAdjust="spacingAndGlyphs">17.17, 11.34, 0.00</text>
<rect x="708.8" y="540.300" width="25.60" height="12.800" fill="#3b4453"/>
<text x="710.90" y="548.90" font-size="6.3" fill="#f0f0f0" stroke="#f0f0f0" stroke-width="0.1" font-weight="normal" font-style="normal" textLength="21.50" lengthAdjust="spacingAndGlyphs">MODEL</text>
<rect x="735.9" y="540.300" width="11.90" height="12.800" fill="#5291d8"/>
<rect x="749.2" y="540.300" width="11.30" height="12.800" fill="#5291d8"/>
<rect x="760.5" y="540.300" width="9.10" height="12.800" fill="#3b4453"/>
<path d="M738 544.600h7.600M738 546.800h7.600M738 549h7.600M739.800 542.800v8M741.900 542.800v8M744 542.800v8" stroke="#ffffff" stroke-width=".7"/>
<g fill="#ffffff"><rect x="751.5" y="543" width="1" height="1"/><rect x="751.5" y="545.2" width="1" height="1"/><rect x="751.5" y="547.4" width="1" height="1"/><rect x="751.5" y="549.6" width="1" height="1"/><rect x="753.7" y="543" width="1" height="1"/><rect x="753.7" y="545.2" width="1" height="1"/><rect x="753.7" y="547.4" width="1" height="1"/><rect x="753.7" y="549.6" width="1" height="1"/><rect x="755.9" y="543" width="1" height="1"/><rect x="755.9" y="545.2" width="1" height="1"/><rect x="755.9" y="547.4" width="1" height="1"/><rect x="755.9" y="549.6" width="1" height="1"/><rect x="758.1" y="543" width="1" height="1"/><rect x="758.1" y="545.2" width="1" height="1"/><rect x="758.1" y="547.4" width="1" height="1"/><rect x="758.1" y="549.6" width="1" height="1"/></g>
<path d="M764.00 545.85h3.2l-1.6 1.9z" fill="#e6e6e6"/>
<rect x="771.4" y="540.300" width="12.30" height="12.800" fill="#5291d8"/>
<rect x="783.7" y="540.300" width="34.80" height="12.800" fill="#3b4453"/>
<path d="M775 543.600v3.200M773.400 545.200h3.200" stroke="#fff" stroke-width=".8"/><rect x="776" y="547.600" width="5.400" height="2.200" fill="#fff"/>
<path d="M787.600 542.600v7.800h6M787.600 548.200h2.200v2.200" fill="none" stroke="#d8dbe0" stroke-width=".8"/>
<circle cx="803" cy="547.200" r="3" fill="none" stroke="#d8dbe0" stroke-width=".8"/><path d="M803 547.200l3.600-2.400M803 547.200h3.800" stroke="#d8dbe0" stroke-width=".7"/>
<path d="M812.80 545.85h3.2l-1.6 1.9z" fill="#e6e6e6"/>
<rect x="820.2" y="540.300" width="11.20" height="12.800" fill="#5291d8"/>
<rect x="832.9" y="540.300" width="11.50" height="12.800" fill="#5291d8"/>
<rect x="844.4" y="540.300" width="22.40" height="12.800" fill="#3b4453"/>
<path d="M822.400 550.400l7-6.600M822.400 550.400h7.400" stroke="#fff" stroke-width=".8" fill="none"/>
<rect x="836.200" y="544.800" width="6" height="5.600" fill="none" stroke="#fff" stroke-width=".8"/><rect x="835" y="543.600" width="2.200" height="2.200" fill="#4a8ed8" stroke="#fff" stroke-width=".6"/>
<path d="M847.70 545.85h3.2l-1.6 1.9z" fill="#e6e6e6"/>
<g fill="#e0e2e6"><rect x="855.600" y="543.400" width="9.200" height=".8"/><rect x="855.600" y="545.400" width="5" height="1.200"/><rect x="855.600" y="547.600" width="9.200" height="1.400"/><rect x="855.600" y="550" width="5" height=".8"/></g>
<rect x="868.3" y="540.300" width="12.40" height="12.800" fill="#5291d8"/>
<rect x="880.7" y="540.300" width="43.90" height="12.800" fill="#3b4453"/>
<path d="M874 542.800L874.9 547.600 877.6 551 876.4 551.400 874 548.800 871.6 551.400 870.4 551 873.1 547.600z" fill="#fff"/>
<circle cx="877.600" cy="544.400" r="1" fill="none" stroke="#fff" stroke-width=".5"/>
<path d="M887 542.800L887.9 547.600 890.6 551 889.4 551.400 887 548.800 884.6 551.400 883.4 551 886.1 547.600z" fill="#e6e6e6"/>
<path d="M889.600 543.400v3M888.400 544.600l1.200-1.400 1.200 1.400" stroke="#e6e6e6" stroke-width=".5" fill="none"/>
<path d="M900.1 542.800L901.0 547.600 903.7 551 902.5 551.400 900.1 548.800 897.7 551.400 896.5 551 899.2 547.600z" fill="#e6e6e6"/>
<text x="909.40" y="549.00" font-size="5.8" fill="#e6e6e6" stroke="#e6e6e6" stroke-width="0.1" font-weight="normal" font-style="normal" textLength="7.10" lengthAdjust="spacingAndGlyphs">1:1</text>
<path d="M919.00 545.85h3.2l-1.6 1.9z" fill="#e6e6e6"/>
<rect x="926" y="540.300" width="14.00" height="12.800" fill="#3b4453"/>
<path d="M929 546.800h8M933 542.800v8" stroke="#f0f0f0" stroke-width="1"/>
<rect x="941.4" y="540.300" width="12.00" height="12.800" fill="#3b4453"/>
<rect x="944.400" y="542.800" width="5.800" height="8" fill="none" stroke="#e0e2e6" stroke-width=".8"/><path d="M945.600 544.800h3.400M945.600 546.800h3.400M945.600 548.800h3.400" stroke="#e0e2e6" stroke-width=".6"/>
<rect x="954.8" y="540.300" width="13.20" height="12.800" fill="#3b4453"/>
<g fill="none" stroke="#e0e2e6" stroke-width=".7"><rect x="957.600" y="543" width="2.600" height="2.600"/><circle cx="964.400" cy="545.600" r="1.500"/><path d="M961 547.600l1.800 3.200h-3.600z"/></g>
<rect x="969.4" y="540.300" width="25.20" height="12.800" fill="#3b4453"/>
<rect x="971.600" y="544" width="4" height="3" fill="#4a8ed8"/><rect x="971.600" y="547.600" width="3" height="2.800" fill="#f2c14e"/><path d="M975 549.400l1.400 1.600 3-3.600" fill="none" stroke="#4fc25a" stroke-width="1.100"/><rect x="974.800" y="542.800" width="2.400" height="2.400" fill="#e6e6e6"/>
<rect x="983.600" y="543.200" width="8" height="6.400" fill="#cfd2d6"/><path d="M984.600 548l2-2.600 1.600 1.400 2-3" stroke="#6d7684" stroke-width=".6" fill="none"/><path d="M990 547.200l2.400 4h-4.800z" fill="#f08a3c"/>
<rect x="996.4" y="540.300" width="14.40" height="12.800" fill="#3b4453"/>
<rect x="999.400" y="544" width="8.600" height="6" fill="none" stroke="#e0e2e6" stroke-width=".8"/><rect x="1003.600" y="545" width="3.400" height="2.400" fill="#e0e2e6"/><rect x="1000.400" y="548" width="2" height="1.200" fill="#e0e2e6"/>
<rect x="1010.8" y="540.300" width="13.20" height="12.800" fill="#3b4453"/>
<path d="M1012.600 544h8M1012.600 546.800h8M1012.600 549.600h8" stroke="#f0f0f0" stroke-width="1.100"/>
</g>
<g id="taskbar-icons">
<g fill="#ffffff"><path d="M8.200 562.300l3.900-.6v3.500H8.200zM12.700 561.600l4.600-.7v4.300h-4.600zM8.200 565.800h3.900v3.500l-3.900-.6zM12.700 565.800h4.600v4.300l-4.600-.7z"/></g>
<g><path d="M34.600 562.600c.6-2.400 2.600-3.400 5-3l2 3.600-2.400 6.400c-2.400.8-4.400 0-5-2-.6-1.600-.2-3.200.4-5z" fill="#3a86e8"/><path d="M39.600 559.600c3-.6 5.600.2 6.200 2.600.6 2.400 0 4.600-1.200 6.400-1.200 1.800-3.200 2.400-5.400 1.800l2.200-6.600z" fill="#d94fb0"/><path d="M36.800 563.600c.8-1.400 2.400-1.600 4.200-1.400 1.800.2 2.600 1.400 2.200 3-.4 1.600-1.400 2.600-3.200 2.800-1.800.2-3.200-.4-3.600-1.600-.4-1.200 0-2 .4-2.800z" fill="#f4b24c"/><path d="M34.600 566.400c1.800 1.800 4.600 2 6.600.2" stroke="#58d6c6" stroke-width="1.400" fill="none"/><path d="M39.600 559.600c1.600 0 2.600.8 3 2.200" stroke="#f27a5a" stroke-width="1.200" fill="none"/></g>
<g><circle cx="66.400" cy="565.200" r="6.300" fill="#1f7ad6"/><path d="M60.200 566.400c0-4.200 3-7.400 6.800-7.200 3.400.2 5.600 2.600 5.600 5.800h-7.600c-.4 2.600 1.200 4.600 4.200 4.800 1.200 0 2.200-.2 3-.8-1.400 2-3.600 2.800-6 2.600-3.400-.4-6-2.400-6-5.200z" fill="#35c1c9"/><path d="M60.200 566.400c0-3.800 2.800-6.800 6.200-7.200-2.400 1-4 3.400-3.600 6.400.4 2.800 2.400 5 5 5.800-4-.2-7.600-2-7.600-5z" fill="#2aa0dc"/><path d="M64.200 564.600c.8-1.800 4-2 5 .2.200.6.200 1.200 0 1.600h-4.600c-.4-.6-.6-1.200-.4-1.800z" fill="#174a9c"/></g>
<g><path d="M86.300 560.600h4.600l1.200 1.400h6v8H86.300z" fill="#e9a43a"/><path d="M86.300 563.400h11.800v6.600H86.300z" fill="#f8d057"/><rect x="89.600" y="566.800" width="5.200" height="3.200" fill="#3f8fe0"/><rect x="90.800" y="568" width="2.800" height="2" fill="#f8d057"/></g>
<g><circle cx="118.400" cy="565.300" r="6.500" fill="#e04436"/><path d="M118.400 565.300L112.770 568.550A6.500 6.500 0 0 0 118.400 571.800L121.200 566.900z" fill="#34a853"/><path d="M118.400 565.300l-5.630 3.250a6.500 6.500 0 0 1 0-6.500z" fill="#34a853"/><path d="M112.770 562.050l2.800 4.850 2.830-1.600z" fill="#e04436"/><path d="M118.400 565.300h6.500A6.500 6.500 0 0 1 118.400 571.800l2.800-4.900z" fill="#fbc116"/><path d="M118.400 562.400h5.800a6.500 6.500 0 0 1 .7 2.900h-6.500z" fill="#fbc116"/><circle cx="118.400" cy="565.300" r="3.100" fill="#ffffff"/><circle cx="118.400" cy="565.300" r="2.400" fill="#4a8af4"/></g>
<g><path d="M140.600 560.600l7.600-1.400 2 10-7.200 1.800z" fill="#e8f6fb"/><path d="M138.200 566.600l2.400-6 2.600 9.200.2 1.200z" fill="#5fb4cf"/><path d="M140.600 560.600l7.600-1.400.6 2.800-7.400 1.600z" fill="#b9e2ee"/><path d="M148.200 559.200l1.600.6 1 9.400-.6.200z" fill="#c9a44a"/></g>
<rect x="158" y="554.600" width="25.400" height="21.400" fill="#4f6067"/>
<rect x="164" y="559" width="13" height="12.800" fill="#f3dcd8"/>
<text x="165.600" y="570.600" font-size="13.400" font-weight="bold" fill="#b9222c" textLength="9.800" lengthAdjust="spacingAndGlyphs">A</text>
<rect x="190.300" y="559" width="13" height="12.800" rx="2.400" fill="#07b53b"/><ellipse cx="196.800" cy="564.800" rx="4.800" ry="3.700" fill="#fff"/><path d="M195.400 568l.4 2 2.200-1.800z" fill="#fff"/>
<text x="193.400" y="566" font-size="3.200" font-weight="bold" fill="#07b53b" textLength="6.800" lengthAdjust="spacingAndGlyphs">LINE</text>
<g><path d="M216.400 566.400c0-3.200 2.800-5 6.200-5 3.600 0 6 1.800 6 4.600 0 2.800-2.400 5-6 5-1.400 0-1.600-1.200-2.600-1.400-1.800-.2-3.600-.8-3.600-3.200z" fill="#dfe8f0"/><circle cx="219" cy="565.200" r="1.100" fill="#e24a3a"/><circle cx="221.600" cy="563.600" r="1.100" fill="#f2c14e"/><circle cx="224.800" cy="564" r="1.100" fill="#4aa3ea"/><circle cx="219.600" cy="568" r="1.100" fill="#4fc25a"/><path d="M222.800 571l4.400-9.400 1.200.6-4.400 9.400z" fill="#e8a050"/><path d="M227 561.800l1-2.400 1.200.6-1 2.400z" fill="#b8682c"/></g>
<rect x="107.8" y="574.600" width="21.0" height="1.400" fill="#7db8ea"/>
<rect x="134" y="574.600" width="21.0" height="1.400" fill="#7db8ea"/>
<rect x="158" y="574.600" width="25.4" height="1.400" fill="#7db8ea"/>
<rect x="186" y="574.600" width="21.4" height="1.400" fill="#7db8ea"/>
<rect x="212" y="574.600" width="21.6" height="1.400" fill="#7db8ea"/>
<path d="M895.400 566.400l2.800-2.800 2.800 2.800" fill="none" stroke="#f0f0f0" stroke-width=".9"/>
<g fill="none" stroke="#f0f0f0" stroke-width=".7"><rect x="908" y="562.600" width="4.600" height="6.400" rx=".6"/><rect x="910.600" y="564.200" width="3.400" height="2.600"/><path d="M909 561.600h2.600"/></g>
<path d="M920 564h1.400l1.800-1.600v6.200l-1.800-1.600H920z" fill="#f0f0f0"/><path d="M924.400 563.400a3 3 0 0 1 0 4.200M925.800 562.200a4.600 4.600 0 0 1 0 6.600" fill="none" stroke="#f0f0f0" stroke-width=".6"/>
<g fill="none" stroke="#e0e0e0" stroke-width=".7"><path d="M934 568.800a5.600 5.600 0 0 1 5.600-5.600M935.600 568.800a4 4 0 0 1 4-4M937.200 568.800a2.400 2.400 0 0 1 2.400-2.400"/></g><path d="M938.600 568.800v-1h1v1z" fill="#e0e0e0"/>
<text x="945.80" y="567.80" font-size="6.8" fill="#f0f0f0" stroke="#f0f0f0" stroke-width="0.1" font-weight="normal" font-style="normal" textLength="12.10" lengthAdjust="spacingAndGlyphs">ENG</text>
<text x="971.50" y="563.10" font-size="6.6" fill="#f0f0f0" stroke="#f0f0f0" stroke-width="0.1" font-weight="normal" font-style="normal" textLength="13.70" lengthAdjust="spacingAndGlyphs">17:11</text>
<text x="965.40" y="572.20" font-size="6.6" fill="#f0f0f0" stroke="#f0f0f0" stroke-width="0.1" font-weight="normal" font-style="normal" textLength="27.30" lengthAdjust="spacingAndGlyphs">12/3/2569</text>
<path d="M1002.600 561.800h8.400v5.800h-3.200l-1.200 1.600v-1.600h-4z" fill="#f4f4f4"/><path d="M1004 563.600h5.600M1004 565.400h5.600" stroke="#4a4a4a" stroke-width=".5"/>
</g>
</svg>
</div>
</body>
</html>
